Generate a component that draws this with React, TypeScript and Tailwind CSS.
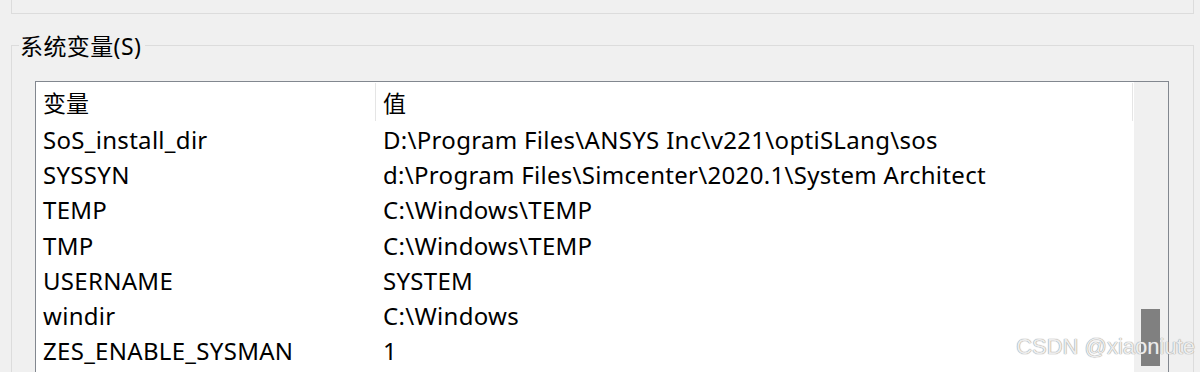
const rows: [string, string][] = [
  ["SoS_install_dir", "D:\\Program Files\\ANSYS Inc\\v221\\optiSLang\\sos"],
  ["SYSSYN", "d:\\Program Files\\Simcenter\\2020.1\\System Architect"],
  ["TEMP", "C:\\Windows\\TEMP"],
  ["TMP", "C:\\Windows\\TEMP"],
  ["USERNAME", "SYSTEM"],
  ["windir", "C:\\Windows"],
  ["ZES_ENABLE_SYSMAN", "1"],
];

const font = "font-['Noto_Sans','Noto_Sans_CJK_SC',sans-serif]";

export default function App() {
  return (
    <div className={`w-[1200px] h-[372px] overflow-hidden bg-[#f0f0f0] relative ${font} text-[23px] text-black`}>
      {/* user variables box (cut off at the top) */}
      <div className="ml-[11px] w-[1183px] h-[14px] border-x border-b border-[#dcdcdc]" />

      {/* system variables group */}
      <div className="relative mt-[31px] ml-[11px] w-[1183px] h-[400px] border-x border-t border-[#dcdcdc]">
        <span className="absolute left-[7px] top-[-13px] bg-[#f0f0f0] pl-[1px] pr-[4px] leading-[26px] tracking-[0.4px]">
          系统变量(S)
        </span>

        <div className="ml-[23px] mt-[35px] w-[1134px] h-[330px] border border-[#82878f] bg-white flex">
          <div className="flex-1 flex flex-col">
            {/* header */}
            <div className="flex h-[41px] items-center">
              <div className="w-[339px] pl-[7px] leading-[40px]">变量</div>
              <div className="w-px h-[38px] self-start mt-[1px] bg-[#e5e5e5]" />
              <div className="flex-1 pl-[7px] leading-[40px]">值</div>
              <div className="w-px h-[38px] self-start mt-[1px] bg-[#e5e5e5]" />
              <div className="w-px" />
            </div>
            <div className="text-[24px] tracking-[0.3px]">
              {rows.map(([name, value]) => (
                <div key={name} className="flex h-[35.2px] leading-[33px] whitespace-nowrap">
                  <div className="w-[340px] pl-[7px]">{name}</div>
                  <div className="flex-1 pl-[7px]">{value}</div>
                </div>
              ))}
            </div>
          </div>

          {/* scrollbar */}
          <div className="w-[34px] bg-[#f0f0f0] flex flex-col">
            <div className="h-[227px]" />
            <div className="ml-[7px] w-[19px] h-[57px] bg-[#808080]" />
          </div>
        </div>
      </div>

      {/* watermark */}
      <div className="absolute right-[5px] bottom-[9px] font-['Liberation_Sans',sans-serif] text-[22px] text-[#ededed] [text-shadow:0_0_1px_#9a9a9a,0_0_1px_#9a9a9a]">
        CSDN @xiaoniute
      </div>
    </div>
  );
}
